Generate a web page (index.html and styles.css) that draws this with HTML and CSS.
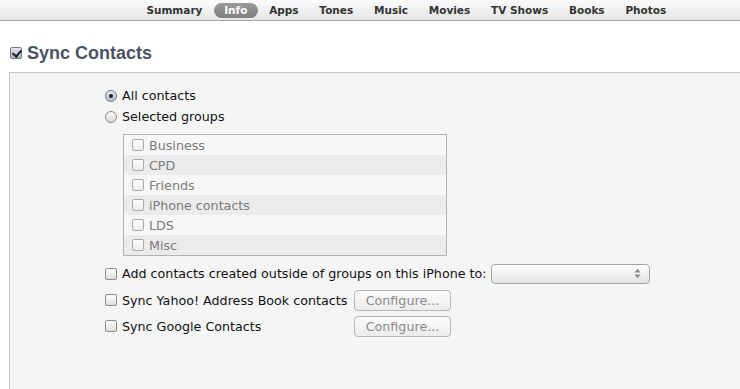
FILE: index.html
```html
<!DOCTYPE html>
<html lang="en">
<head>
    <meta charset="UTF-8">
    <title>Info - Sync Contacts</title>
    <link rel="stylesheet" href="styles.css">
</head>
<body>

    <!-- Device tabs -->
    <nav class="tabbar">
        <span class="tab">Summary</span>
        <span class="tab active">Info</span>
        <span class="tab">Apps</span>
        <span class="tab">Tones</span>
        <span class="tab">Music</span>
        <span class="tab">Movies</span>
        <span class="tab">TV Shows</span>
        <span class="tab">Books</span>
        <span class="tab">Photos</span>
    </nav>

    <!-- Sync Contacts -->
    <main class="page">
        <h2 class="section-title">
            <span class="check checked"></span>
            Sync Contacts
        </h2>

        <section class="panel">
            <div class="option">
                <span class="radio on"></span>
                <span>All contacts</span>
            </div>
            <div class="option">
                <span class="radio"></span>
                <span>Selected groups</span>
            </div>

            <ul class="groups">
                <li><span class="check"></span>Business</li>
                <li><span class="check"></span>CPD</li>
                <li><span class="check"></span>Friends</li>
                <li><span class="check"></span>iPhone contacts</li>
                <li><span class="check"></span>LDS</li>
                <li><span class="check"></span>Misc</li>
            </ul>

            <div class="option add-row">
                <span class="check"></span>
                <span>Add contacts created outside of groups on this iPhone to:</span>
                <span class="select">
                    <svg width="7" height="11" viewBox="0 0 7 11">
                        <path d="M3.5 0.5 L6.5 4.5 L0.5 4.5 Z" fill="#8c8c8c"/>
                        <path d="M3.5 10.5 L6.5 6.5 L0.5 6.5 Z" fill="#8c8c8c"/>
                    </svg>
                </span>
            </div>

            <div class="option service-row">
                <span class="check"></span>
                <span class="service-label">Sync Yahoo! Address Book contacts</span>
                <button class="btn" disabled>Configure...</button>
            </div>
            <div class="option service-row">
                <span class="check"></span>
                <span class="service-label">Sync Google Contacts</span>
                <button class="btn" disabled>Configure...</button>
            </div>
        </section>
    </main>

</body>
</html>
```

FILE: styles.css
```css
/* Reset */
* {
    margin: 0;
    padding: 0;
    box-sizing: border-box;
}

body {
    background: #fff;
    font-family: "DejaVu Sans", "Liberation Sans", sans-serif;
    font-size: 12.7px;
    color: #111;
    overflow: hidden;
}

/* Tab bar */
.tabbar {
    height: 21px;
    display: flex;
    align-items: center;
    padding-left: 136px;
    background: linear-gradient(#fbfbfb, #e6e6e6);
    border-bottom: 1px solid #a3a3a3;
}

.tab {
    font-size: 10.5px;
    font-weight: bold;
    color: #333;
    padding: 0 10.4px;
    line-height: 15px;
    border-radius: 8px;
}

.tab.active {
    background: linear-gradient(#9a9a9a, #7f7f7f);
    color: #fff;
    margin: 0 1px;
}

/* Page */
.page {
    padding-top: 19px;
}

.section-title {
    display: flex;
    align-items: center;
    gap: 5px;
    padding-left: 10px;
    font-family: "Liberation Sans", Arial, sans-serif;
    font-size: 18px;
    font-weight: bold;
    color: #4a5264;
    height: 26px;
}

/* Panel */
.panel {
    margin: 6px 0 0 9px;
    border-top: 1px solid #c6c6c6;
    border-left: 1px solid #c6c6c6;
    background: #f5f5f5;
    height: 330px;
    padding: 12px 0 0 95px;
}

.option {
    display: flex;
    align-items: center;
    gap: 5px;
    height: 21px;
}

/* Controls */
.check {
    width: 12px;
    height: 12px;
    flex: none;
    border: 1px solid #8d8d8d;
    border-radius: 2px;
    background: linear-gradient(#fdfdfd, #dedede);
    display: inline-block;
}

.check.checked {
    position: relative;
    border-color: #6f7884;
    background: linear-gradient(#dfe6ef, #aab6c6);
}

.check.checked::after {
    content: "";
    position: absolute;
    left: 3px;
    top: 0px;
    width: 4px;
    height: 7px;
    border: solid #222;
    border-width: 0 2px 2px 0;
    transform: rotate(40deg);
}

.radio {
    width: 12px;
    height: 12px;
    flex: none;
    border: 1px solid #8a8a8a;
    border-radius: 50%;
    background: linear-gradient(#fdfdfd, #d6d6d6);
    display: inline-flex;
    align-items: center;
    justify-content: center;
}

.radio.on {
    background: linear-gradient(#e4e9ef, #b3bcc8);
    border-color: #6f7884;
}

.radio.on::after {
    content: "";
    width: 4px;
    height: 4px;
    border-radius: 50%;
    background: #222;
}

/* Groups list */
.groups {
    list-style: none;
    width: 324px;
    margin: 7px 0 4px 18px;
    border: 1px solid #b3b3b3;
    background: #f7f7f7;
}

.groups li {
    display: flex;
    align-items: center;
    gap: 5px;
    height: 20px;
    padding-left: 8px;
    color: #7a7a7a;
}

.groups li:nth-child(even) {
    background: #ebebeb;
}

.groups .check {
    border-color: #a8a8a8;
    background: linear-gradient(#fdfdfd, #ececec);
}

/* Add contacts row */
.add-row {
    height: 27px;
}

.select {
    width: 159px;
    height: 20px;
    margin-left: -1px;
    border: 1px solid #a4a4a4;
    border-radius: 4px;
    background: linear-gradient(#fdfdfd, #e3e3e3);
    display: flex;
    align-items: center;
    justify-content: flex-end;
    padding-right: 8px;
}

/* Yahoo / Google rows */
.service-row {
    height: 26px;
}

.service-label {
    width: 227px;
}

.btn {
    width: 97px;
    height: 21px;
    font-family: inherit;
    font-size: 12.7px;
    color: #8a8a8a;
    border: 1px solid #b5b5b5;
    border-radius: 4px;
    background: linear-gradient(#fcfcfc, #ececec);
}
```
